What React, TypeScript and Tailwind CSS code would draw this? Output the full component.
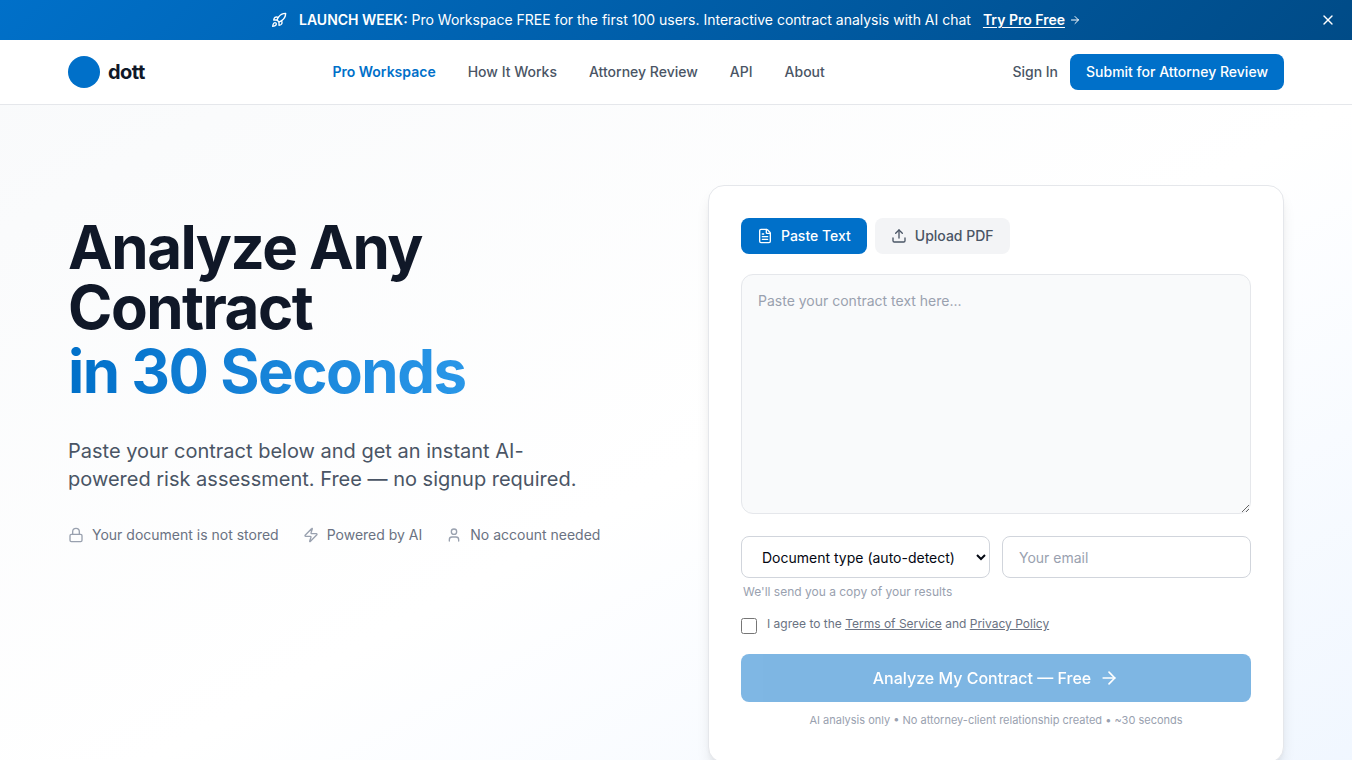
import React, { useState } from 'react';
import { ArrowRight, FileText, Lock, Rocket, Upload, User, X, Zap } from 'lucide-react';

const navLinks = [
  { label: 'Pro Workspace', href: '#pro', active: true },
  { label: 'How It Works', href: '#how-it-works' },
  { label: 'Attorney Review', href: '#attorney-review' },
  { label: 'API', href: '#api' },
  { label: 'About', href: '#about' },
];

const trustItems = [
  { icon: Lock, label: 'Your document is not stored' },
  { icon: Zap, label: 'Powered by AI' },
  { icon: User, label: 'No account needed' },
];

function LaunchBanner({ onClose }: { onClose: () => void }) {
  return (
    <div className="relative flex h-10 items-center justify-center bg-linear-[135deg] from-[#0070c9] to-[#004b87] px-12 text-sm text-white">
      <Rocket className="mr-3 size-4" />
      <p>
        <strong className="font-semibold">LAUNCH WEEK:</strong> Pro Workspace FREE for the first 100 users. Interactive
        contract analysis with AI chat
      </p>
      <a href="#pro" className="ml-3 flex items-center gap-1 font-semibold">
        <span className="underline underline-offset-2">Try Pro Free</span>
        <ArrowRight className="size-3" />
      </a>
      <button type="button" aria-label="Dismiss" onClick={onClose} className="absolute right-4 top-3">
        <X className="size-4" />
      </button>
    </div>
  );
}

function Header() {
  return (
    <header className="border-b border-gray-200 bg-white">
      <div className="mx-auto flex h-16 max-w-7xl items-center justify-between px-8">
        <a href="#home" className="flex items-center gap-2">
          <span className="size-8 rounded-full bg-[#0070c9]" />
          <span className="text-xl font-bold tracking-tight text-gray-900">dott</span>
        </a>
        <nav className="flex items-center gap-8 text-sm font-medium">
          {navLinks.map((link) => (
            <a
              key={link.label}
              href={link.href}
              className={link.active ? 'font-semibold text-[#0070c9]' : 'text-gray-600'}
            >
              {link.label}
            </a>
          ))}
        </nav>
        <div className="flex items-center gap-3 text-sm font-medium">
          <a href="#sign-in" className="text-gray-600">
            Sign In
          </a>
          <a href="#attorney-review" className="flex h-9 items-center rounded-lg bg-[#0070c9] px-4 text-white">
            Submit for Attorney Review
          </a>
        </div>
      </div>
    </header>
  );
}

function HeroCopy() {
  return (
    <div className="pt-8">
      <h1 className="text-6xl font-bold tracking-tight text-gray-900">
        Analyze Any Contract
        <br />
        <span className="inline-block bg-linear-to-r from-[#0070c9] to-[#2997e8] bg-clip-text pb-3 pt-1 text-transparent">
          in 30 Seconds
        </span>
      </h1>
      <p className="mt-6 max-w-lg text-xl text-gray-600">
        Paste your contract below and get an instant AI-powered risk assessment. Free — no signup required.
      </p>
      <ul className="mt-8 flex items-center gap-6 text-sm text-gray-500">
        {trustItems.map((item) => (
          <li key={item.label} className="flex items-center gap-2">
            <item.icon className="size-4 text-gray-400" />
            {item.label}
          </li>
        ))}
      </ul>
    </div>
  );
}

function AnalyzeForm() {
  const [mode, setMode] = useState<'paste' | 'upload'>('paste');
  const tabClass = (active: boolean) =>
    `flex h-9 items-center gap-2 rounded-lg px-4 text-sm font-medium ${
      active ? 'bg-[#0070c9] text-white' : 'bg-gray-100 text-gray-600'
    }`;

  return (
    <form
      onSubmit={(e) => e.preventDefault()}
      className="rounded-2xl border border-gray-200 bg-white p-8 shadow-lg"
    >
      <div className="mb-5 flex gap-2">
        <button type="button" onClick={() => setMode('paste')} className={tabClass(mode === 'paste')}>
          <FileText className="size-4" />
          Paste Text
        </button>
        <button type="button" onClick={() => setMode('upload')} className={tabClass(mode === 'upload')}>
          <Upload className="size-4" />
          Upload PDF
        </button>
      </div>

      <textarea
        aria-label="Contract text"
        placeholder="Paste your contract text here..."
        className="block h-60 w-full resize-y rounded-xl border border-gray-200 bg-gray-50 p-4 text-sm placeholder:text-gray-400"
      />

      <div className="mt-5.5 grid grid-cols-2 gap-3">
        <select
          aria-label="Document type"
          className="h-10.5 rounded-lg border border-gray-300 bg-white px-4 text-sm text-gray-950"
        >
          <option>Document type (auto-detect)</option>
          <option>NDA</option>
          <option>Employment agreement</option>
          <option>Lease</option>
        </select>
        <input
          type="email"
          aria-label="Your email"
          placeholder="Your email"
          className="h-10.5 min-w-0 rounded-lg border border-gray-300 bg-white px-4 text-sm placeholder:text-gray-400"
        />
      </div>
      <p className="mt-1.5 px-0.5 text-xs text-gray-400">We'll send you a copy of your results</p>

      <div className="mt-4 flex items-start gap-2.5 text-xs text-gray-500">
        <input id="agree" type="checkbox" className="mt-0.5 size-4" />
        <label htmlFor="agree">
          I agree to the{' '}
          <a href="#terms" className="underline">
            Terms of Service
          </a>{' '}
          and{' '}
          <a href="#privacy" className="underline">
            Privacy Policy
          </a>
        </label>
      </div>

      <button
        type="submit"
        disabled
        className="mt-5 flex h-12 w-full items-center justify-center gap-2 rounded-lg bg-[#0070c9] font-medium text-white opacity-50"
      >
        Analyze My Contract — Free
        <ArrowRight className="size-5" />
      </button>
      <p className="mt-2.5 pb-0.5 text-center text-[11px] leading-4 text-gray-400">
        AI analysis only • No attorney-client relationship created • ~30 seconds
      </p>
    </form>
  );
}

export default function App() {
  const [showBanner, setShowBanner] = useState(true);

  return (
    <div className="min-h-screen bg-white font-['Inter',sans-serif]">
      {showBanner && <LaunchBanner onClose={() => setShowBanner(false)} />}
      <Header />
      <main className="bg-linear-to-br from-gray-50 via-white to-blue-50">
        <div className="mx-auto grid max-w-7xl grid-cols-2 items-start gap-16 px-8 py-20">
          <HeroCopy />
          <AnalyzeForm />
        </div>
      </main>
    </div>
  );
}
